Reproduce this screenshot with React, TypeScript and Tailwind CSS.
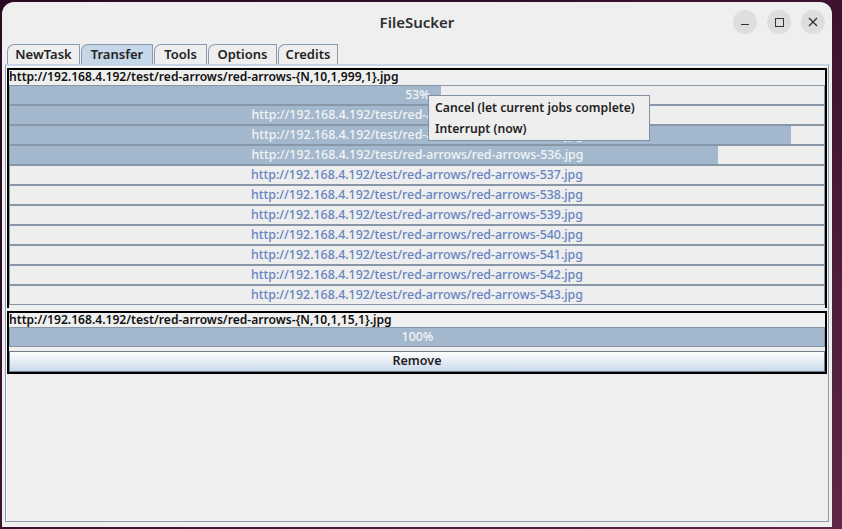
import React from "react";

const font = { fontFamily: '"Noto Sans", "Open Sans", sans-serif' };

type Row = { label: string; pct: number };

const rows: Row[] = [
  { label: "53%", pct: 53 },
  { label: "http://192.168.4.192/test/red-arrows/red-arrows-534.jpg", pct: 68 },
  { label: "http://192.168.4.192/test/red-arrows/red-arrows-535.jpg", pct: 96 },
  { label: "http://192.168.4.192/test/red-arrows/red-arrows-536.jpg", pct: 87 },
  ...[537, 538, 539, 540, 541, 542, 543].map((n) => ({
    label: `http://192.168.4.192/test/red-arrows/red-arrows-${n}.jpg`,
    pct: 0,
  })),
];

function Bar({ label, pct }: Row) {
  return (
    <div className="relative h-[20px] border border-[#8797a8] bg-[#eeeeee] overflow-hidden">
      <div className="absolute inset-0 flex items-center justify-center text-[12.4px] font-medium text-[#6584c0]">
        {label}
      </div>
      <div
        className="absolute inset-y-0 left-0 overflow-hidden bg-[#a3b8cc]"
        style={{ width: `${pct}%` }}
      >
        <div className="w-[815px] h-full flex items-center justify-center text-[12.4px] font-medium text-[#f2f4f6]">
          {label}
        </div>
      </div>
    </div>
  );
}

const tabs = [
  { name: "NewTask", w: 73 },
  { name: "Transfer", w: 72, active: true },
  { name: "Tools", w: 53 },
  { name: "Options", w: 69 },
  { name: "Credits", w: 60 },
];

export default function App() {
  return (
    <div
      className="w-[842px] h-[529px] overflow-hidden bg-gradient-to-br from-[#2a0a20] via-[#3d1230] to-[#5e2848] pl-[2px] pt-[2px]"
      style={font}
    >
      <div className="w-[830px] h-[525px] rounded-t-[12px] bg-[#efefef] flex flex-col">
        {/* title bar */}
        <div className="h-[40px] shrink-0 grid grid-cols-[1fr_auto_1fr] items-center">
          <div />
          <div className="text-[15px] font-semibold text-[#2e2e2e]">FileSucker</div>
          <div className="flex justify-end gap-[10px] pr-[7px]">
            <div className="w-[24px] h-[24px] rounded-full bg-[#dedede] flex items-center justify-center">
              <div className="w-[8px] h-[1.5px] bg-[#333] mt-[5px]" />
            </div>
            <div className="w-[24px] h-[24px] rounded-full bg-[#dedede] flex items-center justify-center">
              <div className="w-[9px] h-[9px] border-[1.5px] border-[#333]" />
            </div>
            <div className="w-[24px] h-[24px] rounded-full bg-[#dedede] flex items-center justify-center">
              <svg width="10" height="10" viewBox="0 0 10 10">
                <path d="M1 1L9 9M9 1L1 9" stroke="#333" strokeWidth="1.4" />
              </svg>
            </div>
          </div>
        </div>

        {/* tabs */}
        <div className="flex pl-[5px] pt-[2px] h-[22px] shrink-0">
          {tabs.map((t) => (
            <div
              key={t.name}
              className={`h-[20px] mr-[1px] rounded-tl-[7px] border border-b-0 border-[#8a9bb0] flex items-center justify-center text-[13px] font-semibold text-[#222] ${
                t.active ? "bg-[#c4d6e8]" : "bg-[#eeeeee]"
              }`}
              style={{ width: t.w }}
            >
              {t.name}
            </div>
          ))}
        </div>

        {/* tab panel */}
        <div className="mx-[3px] h-[458px] border border-[#8a9bb0] border-t-[#c4d6e8] border-t-2 bg-[#efefef] shadow-[inset_1px_1px_0_#ffffff] pt-[2px] px-[1px] flex flex-col gap-[3px]">
          {/* task 1 */}
          <div className="relative h-[240px] border-2 border-b-0 border-black">
            <div className="h-[15px] leading-[14px] text-[12.1px] font-semibold text-[#111]">
              http://192.168.4.192/test/red-arrows/red-arrows-{"{"}N,10,1,999,1{"}"}.jpg
            </div>
            <div className="flex flex-col">
              {rows.map((r, i) => (
                <Bar key={i} {...r} />
              ))}
            </div>
            <div className="absolute left-[419px] top-[25px] w-[222px] h-[46px] border border-[#7f90a6] bg-[#eeeeee] flex flex-col justify-center pl-[6px] text-[12.2px] font-semibold text-[#222]">
              <div className="h-[21px] leading-[21px]">Cancel (let current jobs complete)</div>
              <div className="h-[21px] leading-[21px]">Interrupt (now)</div>
            </div>
          </div>

          {/* task 2 */}
          <div className="border-2 border-black">
            <div className="h-[14px] leading-[13px] text-[12.1px] font-semibold text-[#111]">
              http://192.168.4.192/test/red-arrows/red-arrows-{"{"}N,10,1,15,1{"}"}.jpg
            </div>
            <Bar label="100%" pct={100} />
            <div className="mt-[4px] h-[21px] border border-[#6f7f90] bg-gradient-to-b from-[#ffffff] to-[#c9d9ea] flex items-center justify-center text-[12.5px] font-semibold text-[#222]">
              Remove
            </div>
          </div>
        </div>
      </div>
    </div>
  );
}
